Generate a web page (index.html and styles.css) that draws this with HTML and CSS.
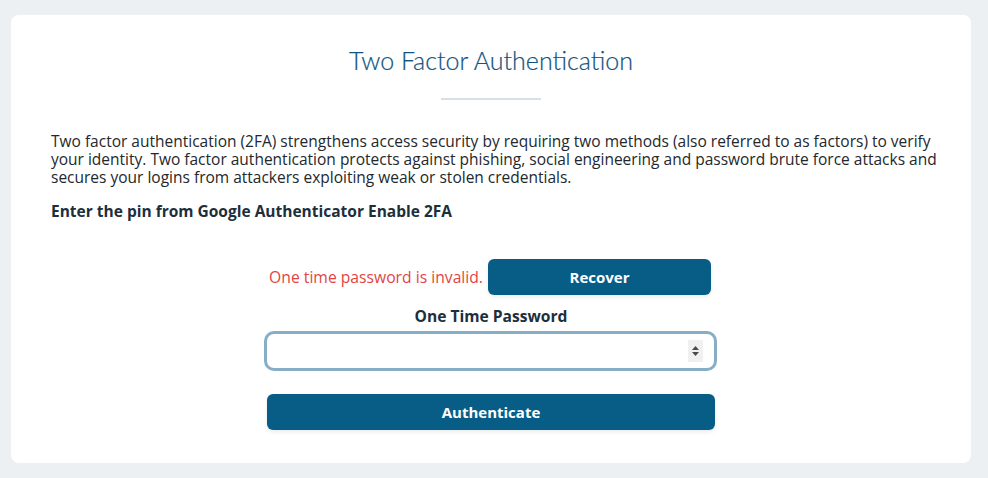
FILE: index.html
```html
<!DOCTYPE html>
<html>
<head>
<meta charset="utf-8">
<link rel="stylesheet" href="styles.css">
</head>
<body>
<div class="card">
  <h1 class="title">Two Factor Authentication</h1>
  <div class="divider"></div>
  <p class="intro">Two factor authentication (2FA) strengthens access security by requiring two methods (also referred to as factors) to verify your identity. Two factor authentication protects against phishing, social engineering and password brute force attacks and secures your logins from attackers exploiting weak or stolen credentials.</p>
  <p class="lead">Enter the pin from Google Authenticator Enable 2FA</p>
  <form class="form">
    <div class="status-row">
      <span class="error">One time password is invalid.</span>
      <button type="button" class="btn btn-recover">Recover</button>
    </div>
    <label class="label" for="otp">One Time Password</label>
    <div class="input-wrap">
      <input id="otp" class="input" type="text">
      <span class="spinner">
        <svg width="9" height="14" viewBox="0 0 9 14"><path d="M4.5 2 L8 6 L1 6 Z" fill="#4a4a4a"/><path d="M1 8 L8 8 L4.5 12 Z" fill="#4a4a4a"/></svg>
      </span>
    </div>
    <button type="button" class="btn btn-auth">Authenticate</button>
  </form>
</div>
</body>
</html>
```
FILE: styles.css
```css
* { box-sizing: border-box; }
html, body { margin: 0; padding: 0; }
body {
  background: #edf0f3;
  font-family: "Open Sans", "Noto Sans", sans-serif;
  padding: 15px 17px 15px 11px;
}
.card {
  background: #fff;
  border-radius: 8px;
  width: 960px;
  height: 448px;
  padding: 30px 40px 0 40px;
}
.title {
  margin: 0;
  text-align: center;
  font-family: "Lato", sans-serif;
  font-weight: 300;
  font-size: 25px;
  color: #11547f;
  line-height: 30px;
  -webkit-text-stroke: 0.2px #11547f;
}
.divider {
  width: 100px;
  height: 2px;
  background: #d6e0e8;
  margin: 23px auto 0;
}
.intro {
  margin: 32px -26px 0 0;
  font-size: 15.5px;
  line-height: 18px;
  color: #23282d;
}
.lead {
  margin: 16px 0 0 0;
  font-size: 15.5px;
  font-weight: 700;
  line-height: 18px;
  color: #1d2f3b;
}
.form {
  width: 450px;
  margin: 39px auto 0;
  display: flex;
  flex-direction: column;
  align-items: stretch;
}
.status-row {
  display: grid;
  grid-template-columns: 222px 223px;
  column-gap: 0;
  align-items: center;
}
.error {
  text-align: right;
  padding-right: 5px;
  color: #e34444;
  font-size: 15.7px;
}
.btn {
  border: none;
  background: #085d87;
  color: #fff;
  font-family: inherit;
  font-weight: 700;
  font-size: 15px;
  border-radius: 6px;
  height: 36px;
  box-shadow: 0 2px 4px rgba(0,0,0,0.08);
}
.label {
  text-align: center;
  font-weight: 700;
  font-size: 15.6px;
  color: #1d2f3b;
  margin-top: 12px;
  line-height: 18px;
}
.input-wrap {
  position: relative;
  margin-top: 6px;
  margin-left: -2px;
  margin-right: -1px;
}
.input {
  display: block;
  width: 100%;
  height: 40px;
  border: 3px solid #86aec5;
  border-radius: 10px;
  outline: none;
  font-family: inherit;
  font-size: 15px;
}
.spinner {
  position: absolute;
  right: 14px;
  top: 9px;
  width: 15px;
  height: 22px;
  background: #f0f0f0;
  display: flex;
  align-items: center;
  justify-content: center;
}
.btn-auth {
  margin-top: 23px;
  width: 448px;
  margin-left: 1px;
}
```
